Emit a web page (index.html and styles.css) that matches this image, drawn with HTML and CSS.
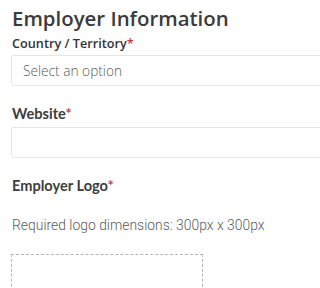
FILE: index.html
```html
<!DOCTYPE html>
<html>
<head>
<meta charset="utf-8">
<link rel="stylesheet" href="styles.css">
</head>
<body>
<div class="form">
  <h1 class="title">Employer Information</h1>
  <div class="field field-country">
    <label class="label label-round">Country / Territory<span class="req">*</span></label>
    <div class="select">Select an option</div>
  </div>
  <div class="field field-website">
    <label class="label label-lato">Website<span class="req req-soft">*</span></label>
    <div class="input"></div>
  </div>
  <div class="field field-logo">
    <label class="label label-lato">Employer Logo<span class="req req-soft">*</span></label>
    <p class="hint">Required logo dimensions: 300px x 300px</p>
    <div class="dropzone"></div>
  </div>
</div>
</body>
</html>
```
FILE: styles.css
```css
html, body {
  margin: 0;
  padding: 0;
  background: #ffffff;
  overflow: hidden;
}
.form {
  padding: 5px 0 0 11px;
  width: 320px;
}
.title {
  margin: 0 0 0 1px;
  font-family: "Open Sans", sans-serif;
  font-weight: 600;
  font-size: 20.4px;
  line-height: 27px;
  color: #3b3b3b;
}
.label {
  display: block;
  color: #333333;
  margin-left: 1px;
}
.label-round {
  font-family: "Open Sans", sans-serif;
  font-weight: 600;
  font-size: 12.7px;
  line-height: 17px;
}
.label-lato {
  font-family: Lato, sans-serif;
  font-weight: 700;
  font-size: 14.6px;
  line-height: 18px;
  color: #3d3d3d;
}
.req {
  color: #d0313f;
}
.req-soft {
  color: #b04a5e;
}
.field-country {
  margin-top: 3px;
}
.select {
  margin-top: 3px;
  height: 29px;
  border: 1px solid #e6e6e6;
  border-radius: 2px;
  padding-left: 11px;
  font-family: "Open Sans", sans-serif;
  font-weight: 300;
  font-size: 13.7px;
  line-height: 29px;
  color: #5a5a5a;
}
.field-website {
  margin-top: 19px;
}
.input {
  margin-top: 4px;
  height: 29px;
  border: 1px solid #e6e6e6;
  border-radius: 2px;
}
.field-logo {
  margin-top: 19px;
}
.hint {
  margin: 21px 0 0 1px;
  font-family: Roboto, sans-serif;
  font-weight: 300;
  font-size: 13.9px;
  line-height: 18px;
  color: #5c5c5c;
}
.dropzone {
  margin-top: 20px;
  width: 190px;
  height: 60px;
  border: 1px dashed #b5b5b5;
}
```
